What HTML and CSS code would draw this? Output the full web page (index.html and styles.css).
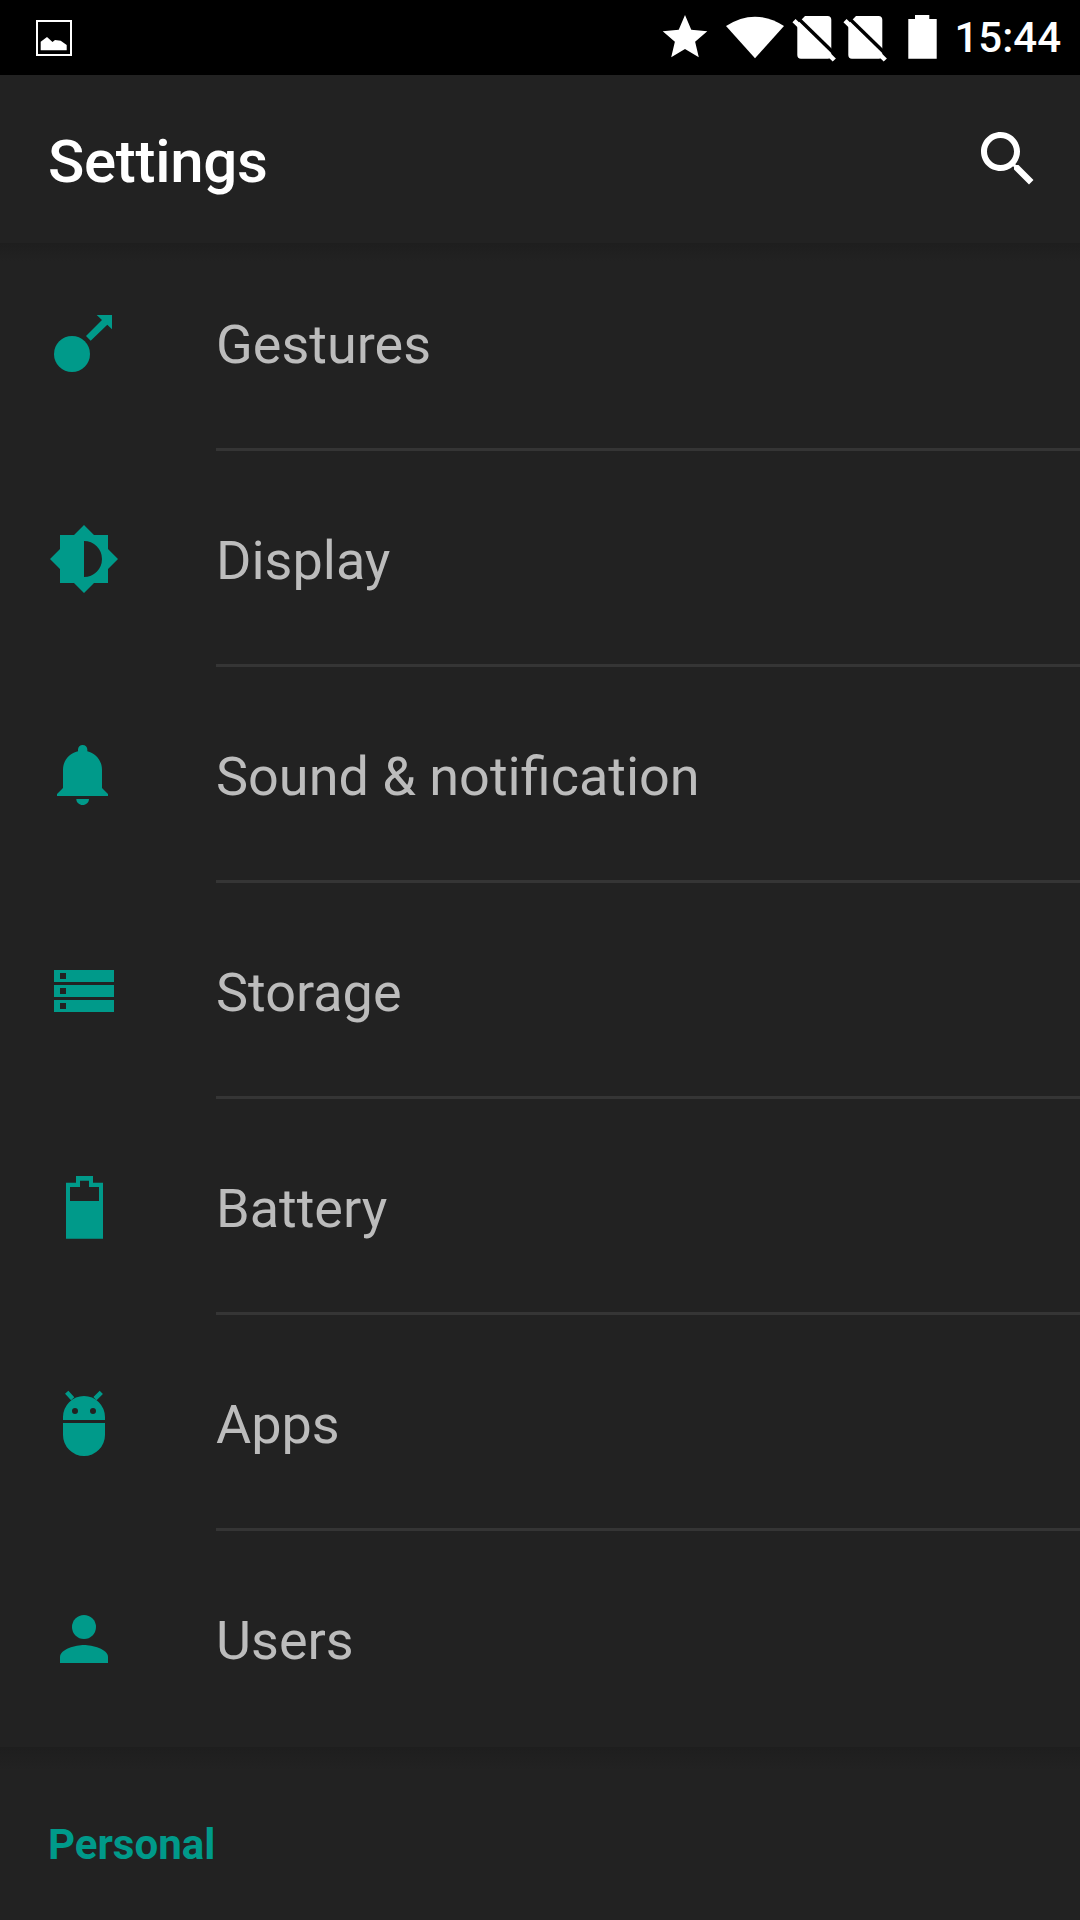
FILE: index.html
```html
<!DOCTYPE html>
<html lang="en">
<head>
<meta charset="utf-8">
<title>Settings</title>
<link rel="stylesheet" href="styles.css">
</head>
<body>
<div class="screen">
  <header class="status">
    <svg class="note-icon" width="36" height="36" viewBox="0 0 36 36"><rect x="1" y="1" width="34" height="34" class="outline"/><path class="white" d="M4.7 30.3V21.7L11 17l5.5 5 2.5-2 5.7 0.7 6 4.3v5.3z"/></svg>
    <div class="status-right">
      <svg width="60" height="75" viewBox="0 0 60 75"><path class="white" transform="translate(-1.76 10.54) scale(2.23)" d="M12 17.27L18.18 21l-1.64-7.03L22 9.24l-7.19-.61L12 2 9.19 8.63 2 9.24l5.46 4.73L5.82 21z"/></svg>
      <svg width="70" height="75" viewBox="0 0 70 75"><path class="white" d="M35 58.3L6 26Q35 7.4 64 26Z"/></svg>
      <svg width="51" height="75" viewBox="0 0 51 75"><path class="white" d="M15 16H37.5a3.8 3.8 0 0 1 3.8 3.8V55a3.7 3.7 0 0 1-3.8 3.7H11a3.7 3.7 0 0 1-3.7-3.7V24Z"/><path class="slash-gap" d="M7.3 17.4L47.6 56.7"/><path class="slash" d="M4 20.7L44.3 60"/></svg>
      <svg width="51" height="75" viewBox="0 0 51 75"><path class="white" d="M15 16H37.5a3.8 3.8 0 0 1 3.8 3.8V55a3.7 3.7 0 0 1-3.8 3.7H11a3.7 3.7 0 0 1-3.7-3.7V24Z"/><path class="slash-gap" d="M7.3 17.4L47.6 56.7"/><path class="slash" d="M4 20.7L44.3 60"/></svg>
      <svg width="60" height="75" viewBox="0 0 60 75"><path class="white" d="M23 15H37.3V19H44.7V58.7H16.3V19H23Z"/></svg>
      <span class="time">15:44</span>
    </div>
  </header>

  <div class="toolbar">
    <h1 class="title">Settings</h1>
    <svg class="search" width="72" height="72" viewBox="0 0 24 24"><path class="white" d="M15.5 14h-.79l-.28-.27C15.41 12.59 16 11.11 16 9.5 16 5.91 13.09 3 9.5 3S3 5.91 3 9.5 5.91 16 9.5 16c1.61 0 3.09-.59 4.23-1.57l.27.28v.79l5 4.99L20.49 19l-4.99-5zm-6 0C7.01 14 5 11.99 5 9.5S7.01 5 9.5 5 14 7.01 14 9.5 11.99 14 9.5 14z"/></svg>
  </div>

  <main class="list">
    <div class="row row-first">
      <svg class="icon" viewBox="0 0 72 72"><circle cx="24" cy="47" r="18"/><path d="M64 8V22.3L59.3 17.7 42.7 33.7 38 29 54 13 48.7 8Z"/></svg>
      <div class="label">Gestures</div>
    </div>
    <div class="row">
      <svg class="icon" viewBox="0 0 72 72"><path fill-rule="evenodd" d="M36 2L46 12H60V26L70 36 60 46V60H46L36 70 26 60H12V46L2 36 12 26V12H26ZM36 18V54A18 18 0 0 0 36 18Z"/></svg>
      <div class="label">Display</div>
    </div>
    <div class="row">
      <svg class="icon" viewBox="0 0 72 72"><path d="M34.67 6C37.3 6 39.33 8 39.33 10.6V12.2C47.5 14.3 54 21 54 31V49L60 55V57H9V55L15 49V31C15 21 21.5 14.3 30 12.2V10.6C30 8 32 6 34.67 6ZM28.3 60H41C41 63.5 38 66 34.67 66S28.3 63.5 28.3 60Z"/></svg>
      <div class="label">Sound &amp; notification</div>
    </div>
    <div class="row">
      <svg class="icon" viewBox="0 0 72 72"><path fill-rule="evenodd" d="M6 15H66V27H6ZM12 18V24H18V18ZM6 30H66V42H6ZM12 33V39H18V33ZM6 45H66V57H6ZM12 48V54H18V48Z"/></svg>
      <div class="label">Storage</div>
    </div>
    <div class="row">
      <svg class="icon" viewBox="0 0 72 72"><path fill-rule="evenodd" d="M28 5H45V11.7H55V67.7H18V11.7H28ZM32 9.7V16H22V30H51V16H41V9.7Z"/></svg>
      <div class="label">Battery</div>
    </div>
    <div class="row">
      <svg class="icon" viewBox="0 0 72 72"><path fill-rule="evenodd" d="M15 33V30A21 21 0 0 1 57 30V33ZM27 21A3 3 0 1 0 27 27 3 3 0 0 0 27 21ZM45 21A3 3 0 1 0 45 27 3 3 0 0 0 45 21ZM15 36H57V48A21 21 0 0 1 15 48Z"/><path class="antenna" d="M18.7 5.3L24.7 11.7M53.3 5.3L47 11.7"/></svg>
      <div class="label">Apps</div>
    </div>
    <div class="row">
      <svg class="icon" viewBox="0 0 72 72"><circle cx="36" cy="24" r="12"/><path d="M12 60V54C12 46 28 42 36 42S60 46 60 54V60Z"/></svg>
      <div class="label label-last">Users</div>
    </div>
  </main>

  <section class="category">
    <h2 class="category-title">Personal</h2>
  </section>
</div>
</body>
</html>
```
FILE: styles.css
```css
* { box-sizing: border-box; }
html, body { margin: 0; padding: 0; background: #222222; }
.screen {
  width: 1080px;
  height: 1920px;
  overflow: hidden;
  background: #222222;
  font-family: Roboto, "Noto Sans", sans-serif;
}
.white { fill: #ffffff; }
.status {
  height: 75px;
  background: #000000;
  display: flex;
  align-items: center;
  justify-content: space-between;
  padding: 0 19px 0 36px;
}
.note-icon { flex: none; }
.outline { fill: none; stroke: #ffffff; stroke-width: 2; }
.status-right { display: flex; align-items: center; }
.status-right svg { display: block; flex: none; }
.slash-gap { stroke: #000000; stroke-width: 3.5; fill: none; }
.slash { stroke: #ffffff; stroke-width: 4.5; fill: none; }
.time {
  margin-left: 2px;
  color: #ffffff;
  font-size: 42px;
  font-weight: 500;
  line-height: 75px;
}
.toolbar {
  height: 168px;
  background: #222222;
  display: flex;
  align-items: center;
  justify-content: space-between;
  padding: 0 36px 0 48px;
}
.title {
  margin: 4px 0 0;
  color: #ffffff;
  font-size: 60px;
  font-weight: 500;
  letter-spacing: -0.3px;
}
.search { display: block; flex: none; }
.list {
  background: linear-gradient(#1e1e1e, #222222 18px);
}
.row {
  height: 216px;
  padding: 72px 0 0 48px;
  display: flex;
  align-items: flex-start;
}
.row-first { height: 208px; padding-top: 64px; }
.icon {
  display: block;
  flex: none;
  width: 72px;
  height: 72px;
  fill: #009a8a;
}
.antenna { fill: none; stroke: #009a8a; stroke-width: 4.5; }
.label {
  flex: 1;
  height: 134px;
  margin: 10px 0 0 96px;
  color: #bcbcbc;
  font-size: 54px;
  line-height: 56px;
  border-bottom: 3px solid #353535;
}
.label-last { border-bottom: 0; }
.category {
  height: 173px;
  padding: 70px 0 0 48px;
  background: linear-gradient(#1e1e1e, #222222 24px);
}
.category-title {
  margin: 0;
  color: #009a8a;
  font-size: 42px;
  font-weight: 700;
  line-height: 56px;
}
```
